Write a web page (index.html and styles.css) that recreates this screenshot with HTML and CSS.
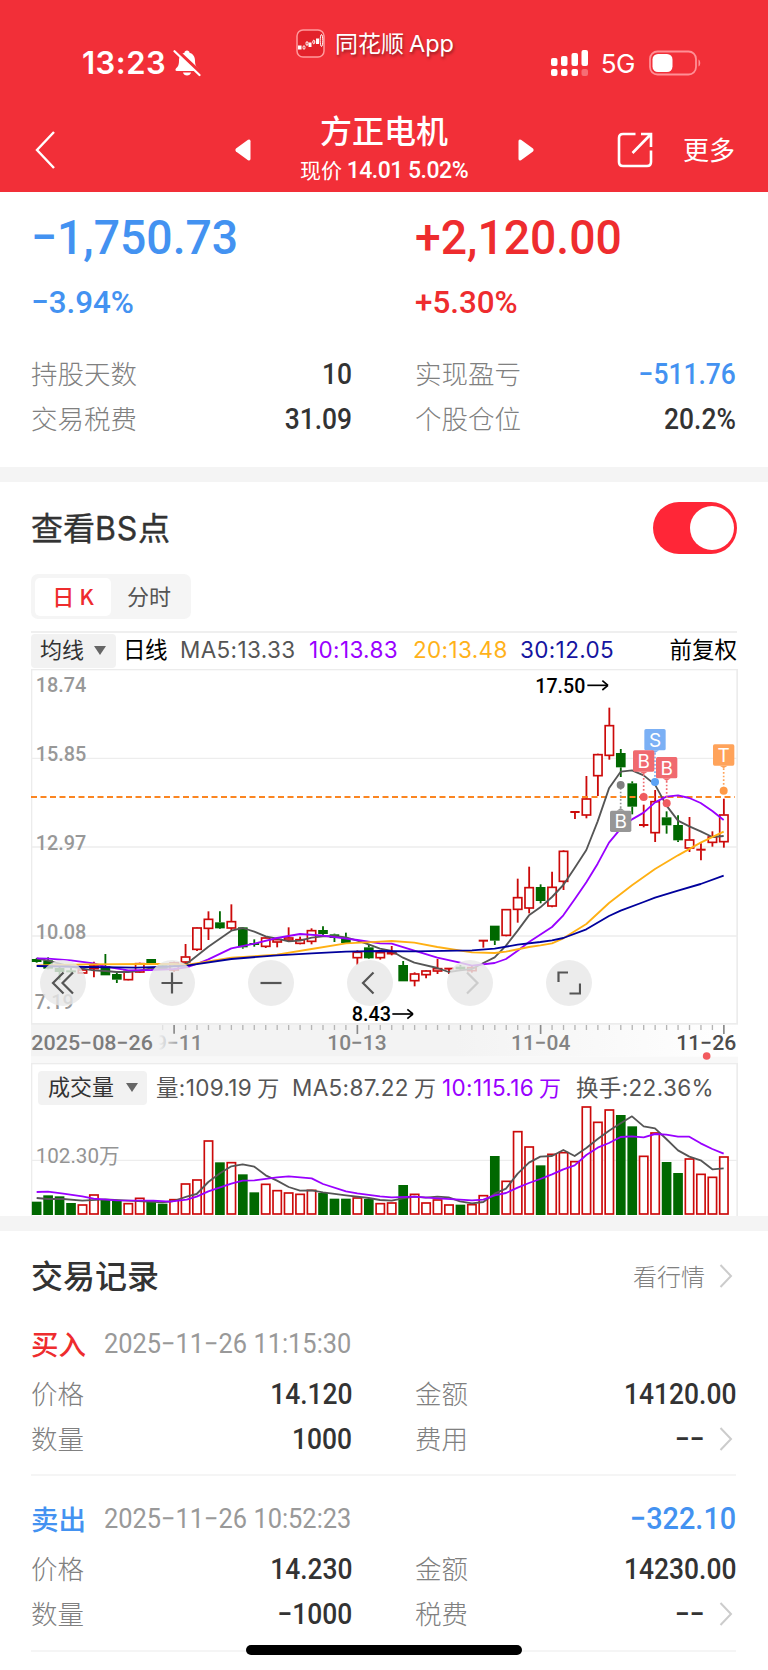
FILE: index.html
```html
<!DOCTYPE html>
<html lang="zh-CN">
<head>
<meta charset="utf-8">
<title>方正电机</title>
<link rel="stylesheet" href="styles.css">
</head>
<body>
<header class="top">
	<div class="status">
		<div class="status-left">
			<span class="time">13:23</span>
			<svg class="bell" width="28" height="28" viewBox="0 0 28 28">
				<path d="M14 1.500c-1.500 0-2.500 1-2.500 2.200C7.800 4.700 6 7.800 6 11.500c0 5-1.200 6.300-3 8-1 1-.6 2.500.8 2.500h20.400c1.400 0 1.800-1.500.8-2.500-1.800-1.700-3-3-3-8 0-3.700-1.800-6.800-5.500-7.800C16.500 2.500 15.500 1.500 14 1.500z" fill="#fff"/>
				<path d="M10 23.500h8c-.4 2-2 3-4 3s-3.600-1-4-3z" fill="#fff"/>
				<path d="M3 1L28 24.500" stroke="#f22f38" stroke-width="4"/>
				<path d="M1.500 2.200L26.500 26" stroke="#fff" stroke-width="2.200" stroke-linecap="round"/>
			</svg>
		</div>
		<div class="status-app">
			<svg width="30" height="30" viewBox="0 0 30 30">
				<rect x="1" y="1" width="27" height="27" rx="6" fill="#e3222b" stroke="#ff9a9c" stroke-width="1.500"/>
				<g fill="#fff">
					<rect x="2" y="16.500" width="3.500" height="4"/><rect x="12.500" y="13.500" width="3" height="4.500"/><rect x="20" y="9.500" width="3" height="5.500"/>
				</g>
				<g fill="none" stroke="#fff">
					<ellipse cx="8" cy="18.500" rx="1" ry="1.800"/><ellipse cx="11" cy="14.500" rx="1" ry="2"/><ellipse cx="17.800" cy="13" rx="1" ry="1.800"/><ellipse cx="25.500" cy="11.500" rx="1.300" ry="6"/>
				</g>
			</svg>
			<span>同花顺<b>App</b></span>
		</div>
		<div class="status-right">
			<svg width="38" height="28" viewBox="0 0 38 28" fill="#fff">
				<rect x="0" y="9" width="6.500" height="8" rx="2"/><rect x="10" y="7" width="6.500" height="10" rx="2"/><rect x="20.500" y="4" width="6.500" height="13" rx="2"/><rect x="30.500" y="1" width="6.500" height="16" rx="2"/>
				<rect x="0" y="20" width="6.500" height="7" rx="2"/><rect x="10" y="20" width="6.500" height="7" rx="2"/><rect x="20.500" y="20" width="6.500" height="7" rx="2"/><rect x="30.500" y="20" width="6.500" height="7" rx="2" opacity=".3"/>
			</svg>
			<span class="net">5G</span>
			<svg width="52" height="26" viewBox="0 0 52 26">
				<rect x="1" y="1.500" width="46" height="23" rx="7.500" fill="none" stroke="#ff9096" stroke-width="1.800"/>
				<rect x="3.500" y="4" width="20" height="18" rx="5.500" fill="#fff"/>
				<path d="M49.500 9.500c2.300 1 2.300 6 0 7z" fill="#ff9096"/>
			</svg>
		</div>
	</div>
	<nav class="nav">
		<svg class="back" width="22" height="40" viewBox="0 0 22 40"><path d="M20 2L3 20l17 18" fill="none" stroke="#fff" stroke-width="2.400"/></svg>
		<svg class="prev" width="16" height="22" viewBox="0 0 16 22"><path d="M1 9.500L13 .8q2.500-1 2.500 1.500v17.400q0 2.500-2.500 1.500L1 12.500q-1.200-1.500 0-3z" fill="#fff"/></svg>
		<div class="title">
			<h1>方正电机</h1>
			<p>现价 <span class="num">14.01 5.02%</span></p>
		</div>
		<svg class="next" width="16" height="22" viewBox="0 0 16 22"><path d="M15 9.500L3 .8Q.5-.2.5 2.300v17.400q0 2.500 2.500 1.500l12-8.700q1.200-1.500 0-3z" fill="#fff"/></svg>
		<svg class="share" width="36" height="36" viewBox="0 0 36 36" fill="none" stroke="#fff" stroke-width="2.600"><path d="M18.500 2H6Q2 2 2 6v24q0 4 4 4h24q4 0 4-4V18.500"/><path d="M24 2h10v13M34 2L15.500 21"/></svg>
		<span class="more">更多</span>
	</nav>
</header>

<section class="profit">
	<div class="col">
		<div class="amount blue num">−1,750.73</div>
		<div class="rate blue num">−3.94%</div>
		<div class="row"><label>持股天数</label><span class="num">10</span></div>
		<div class="row"><label>交易税费</label><span class="num">31.09</span></div>
	</div>
	<div class="col">
		<div class="amount red num">+2,120.00</div>
		<div class="rate red num">+5.30%</div>
		<div class="row"><label>实现盈亏</label><span class="num blue">−511.76</span></div>
		<div class="row"><label>个股仓位</label><span class="num">20.2%</span></div>
	</div>
</section>

<section class="chart">
	<div class="chart-head">
		<h2>查看<i>BS</i>点</h2>
		<div class="toggle"><div class="knob"></div></div>
	</div>
	<div class="tabs">
		<div class="tab active">日 K</div>
		<div class="tab">分时</div>
	</div>
	<div class="ma-bar">
		<div class="select">均线<i class="arrow"></i></div>
		<span class="day">日线</span>
		<span class="ma5">MA5:13.33</span>
		<span class="ma10">10:13.83</span>
		<span class="ma20">20:13.48</span>
		<span class="ma30">30:12.05</span>
		<span class="fq">前复权</span>
	</div>
	<div class="kline">
		<svg id="kline" width="707" height="394" viewBox="33 27 2121 1182"></svg>
		<div class="tools">
			<div class="tool first"><svg width="24" height="24" viewBox="0 0 24 24"><path d="M12.500 1.500L2 12l10.500 10.500M22 1.500L11.500 12 22 22.500"/></svg></div>
			<div class="tool"><svg width="24" height="24" viewBox="0 0 24 24"><path d="M1.500 12h21M12 1.500v21"/></svg></div>
			<div class="tool"><svg width="24" height="24" viewBox="0 0 24 24"><path d="M1.500 12h21"/></svg></div>
			<div class="tool"><svg width="24" height="24" viewBox="0 0 24 24"><path d="M15.500 1.500L5 12l10.500 10.500"/></svg></div>
			<div class="tool off"><svg width="24" height="24" viewBox="0 0 24 24"><path d="M9 1.500L19.500 12 9 22.500"/></svg></div>
			<div class="tool"><svg width="24" height="24" viewBox="0 0 24 24"><path d="M1.500 11V1.500H11M23 12.500V22.500H12.500"/></svg></div>
		</div>
	</div>
	<div class="volume">
		<div class="vol-bar">
			<div class="select">成交量<i class="arrow"></i></div>
			<span class="v1">量:109.19<em>万</em></span>
			<span class="v2">MA5:87.22<em>万</em></span>
			<span class="v3 ma10">10:115.16<em>万</em></span>
			<span class="v4">换手:22.36%</span>
		</div>
		<svg id="volume" width="707" height="153" viewBox="33 39 2121 459"></svg>
	</div>
</section>

<section class="records">
	<div class="rec-head">
		<h2>交易记录</h2>
		<span class="link">看行情</span>
		<svg class="chev" width="14" height="24" viewBox="0 0 14 24"><path d="M1.500 1L12 12 1.500 23"/></svg>
	</div>
	<div class="record first">
		<div class="rec-title"><b class="red">买入</b><time class="num">2025−11−26 11:15:30</time></div>
		<div class="cols">
			<div class="col">
				<div class="row"><label>价格</label><span class="num">14.120</span></div>
				<div class="row"><label>数量</label><span class="num">1000</span></div>
			</div>
			<div class="col">
				<div class="row"><label>金额</label><span class="num">14120.00</span></div>
				<div class="row"><label>费用</label><span class="num">−−</span><svg class="chev" width="14" height="24" viewBox="0 0 14 24"><path d="M1.500 1L12 12 1.500 23"/></svg></div>
			</div>
		</div>
	</div>
	<div class="record">
		<div class="rec-title"><b class="blue">卖出</b><time class="num">2025−11−26 10:52:23</time><span class="gain blue num">−322.10</span></div>
		<div class="cols">
			<div class="col">
				<div class="row"><label>价格</label><span class="num">14.230</span></div>
				<div class="row"><label>数量</label><span class="num">−1000</span></div>
			</div>
			<div class="col">
				<div class="row"><label>金额</label><span class="num">14230.00</span></div>
				<div class="row"><label>税费</label><span class="num">−−</span><svg class="chev" width="14" height="24" viewBox="0 0 14 24"><path d="M1.500 1L12 12 1.500 23"/></svg></div>
			</div>
		</div>
	</div>
</section>
<div class="home"></div>
<script src="chart.js"></script>
</body>
</html>
```

FILE: styles.css
```css
* {box-sizing: border-box;margin: 0;padding: 0;}
body {width: 768px;height: 1670px;overflow: hidden;position: relative;background: #fff;color: #333;font-family: "Liberation Sans", "Noto Sans CJK SC", sans-serif;}
svg {display: block;flex: none;}
i, em {font-style: normal;}
span, label, time, b {white-space: nowrap;}
.num {font-family: Roboto, "Noto Sans CJK SC", sans-serif;font-weight: 500;}
.blue {color: #4392f1 !important;}
.red {color: #ee2c2e !important;}

/* header */
.top {height: 192px;background: #f22f38;color: #fff;}
.status {height: 96px;position: relative;display: flex;justify-content: space-between;padding: 23px 67px 0 82px;}
.status-left {display: flex;align-items: center;height: 80px;}
.time {font: 600 31px/40px Inter, sans-serif;width: 91px;letter-spacing: .5px;}
.status-app {position: absolute;left: 296px;top: 28px;display: flex;align-items: center;height: 31px;font: 400 23px/31px "Noto Sans CJK SC", sans-serif;text-shadow: 1px 2px 3px rgba(0,0,0,.4);}
.status-app span {margin: -2px 0 0 9px;}
.status-app b {font: 400 23.500px/31px Inter, sans-serif;margin-left: 5px;}
.status-right {display: flex;align-items: center;height: 80px;}
.net {font: 400 26px/30px Inter, sans-serif;margin: 2px 14px 0 12px;letter-spacing: -.5px;}
.nav {height: 96px;display: flex;align-items: center;padding: 12px 33px 0 34px;}
.prev {margin-left: 179px;}
.title {width: 267px;text-align: center;}
.title h1 {font: 500 32px/38px "Noto Sans CJK SC", sans-serif;margin-top: -4px;}
.title p {font: 400 21px/30px "Noto Sans CJK SC", sans-serif;margin-top: 6px;}
.title .num {font-size: 23px;letter-spacing: -.5px;}
.next {margin-left: 1px;}
.share {margin-left: 83px;}
.more {font: 400 26px/40px "Noto Sans CJK SC", sans-serif;margin: -2px 0 0 30px;}

/* profit */
.profit {height: 275px;padding: 14px 32px 0 31px;display: flex;gap: 63px;}
.col {width: 321px;}
.amount {font-size: 49px;line-height: 64px;height: 62px;transform: scaleX(.945);transform-origin: 0 0;}
.rate {font-size: 32px;line-height: 68px;transform: scaleX(.98);transform-origin: 0 0;}
.row {height: 45px;display: flex;align-items: center;color: #333;}
.row label {flex: 1;font: 300 26.500px/45px "Noto Sans CJK SC", sans-serif;color: #808080;margin-top: -3px;}
.row .num {font-size: 29px;line-height: 45px;margin-top: 2px;transform: scaleX(.91);transform-origin: 100% 0;}
.profit .rate + .row {margin-top: 15px;}

/* chart */
.chart {height: 764px;border-top: 15px solid #f4f4f4;border-bottom: 15px solid #f4f4f4;padding: 0 31px;}
.chart-head {height: 92px;display: flex;align-items: center;justify-content: space-between;}
.chart-head h2 {font: 400 32px/40px "Noto Sans CJK SC", sans-serif;margin-top: -2px;-webkit-text-stroke: .4px #333;}
.chart-head i {font-family: Inter, sans-serif;letter-spacing: .8px;}
.toggle {width: 84px;height: 52px;border-radius: 26px;background: #ff2637;padding: 4px 3px 4px 37px;}
.knob {width: 44px;height: 44px;border-radius: 50%;background: #fff;}
.tabs {width: 160px;height: 45px;border-radius: 7px;background: #f5f5f5;padding: 4px;display: flex;}
.tab {width: 76px;height: 38px;border-radius: 5px;font: 400 22px/35px "Noto Sans CJK SC", sans-serif;text-align: center;color: #555;}
.tab.active {background: #fff;color: #ee2c2e;font-weight: 500;}
.ma-bar {height: 38px;margin-top: 12px;border-top: 2px solid #efefef;display: flex;align-items: center;font: 400 22.500px/34px Inter, "Noto Sans CJK SC", sans-serif;letter-spacing: .35px;color: #000;}
.ma-bar > span {margin-top: -2px;}
.select {height: 34px;width: 85px;padding: 0 0 2px 9px;border-radius: 4px;background: #f2f2f2;color: #333;font-size: 22px;letter-spacing: 0;display: flex;align-items: center;}
.arrow {border: 6px solid transparent;border-top: 9px solid #666;border-bottom: 0;margin-left: 10px;}
.day {margin-left: 7px;width: 57px;letter-spacing: -.5px;}
.ma5 {width: 129px;color: #555;}
.ma10 {width: 104px;color: #90f;}
.ma20 {width: 107px;color: #ffb21a;}
.ma30 {color: #1414a0;}
.ma-bar .fq {margin-left: auto;letter-spacing: 0;}
.kline {position: relative;width: 707px;height: 394px;}
.tools {position: absolute;left: 9px;top: 291px;display: flex;gap: 53.300px;}
.tool {width: 46px;height: 46px;border-radius: 50%;background: rgba(232,232,232,.82);display: flex;align-items: center;justify-content: center;}
.tool.first {margin-right: 9.500px;}
.tool svg {fill: none;stroke: #555;stroke-width: 2.200;}
.tool.off svg {stroke: #ccc;}
.volume {position: relative;width: 707px;height: 153px;}
.vol-bar {position: absolute;left: 7px;top: 8px;display: flex;align-items: center;font: 400 22.500px/34px Inter, "Noto Sans CJK SC", sans-serif;letter-spacing: .35px;color: #555;}
.vol-bar .select {width: 109px;padding-left: 10px;}
.vol-bar em {margin-left: 5px;font-size: 22px;letter-spacing: 0;}
.vol-bar .arrow {margin-left: 12px;}
.v1 {margin-left: 9px;width: 136px;}
.v2 {width: 150px;}
.v3 {width: 134px;}

/* records */
.records {padding: 0 32px 0 31px;}
.rec-head {height: 90px;display: flex;align-items: center;}
.rec-head h2 {flex: 1;font: 500 32px/40px "Noto Sans CJK SC", sans-serif;margin-top: -4px;}
.link {font: 300 24px/40px "Noto Sans CJK SC", sans-serif;color: #808080;}
.chev {fill: none;stroke: #ccc;stroke-width: 2;margin: 0 3px 0 14px;}
.record {height: 176px;padding-top: 20px;border-bottom: 2px solid #f5f5f5;}
.record.first {height: 155px;padding-top: 0;}
.rec-title {height: 50px;padding-bottom: 5px;display: flex;align-items: center;}
.rec-title b {font: 500 27.500px/40px "Noto Sans CJK SC", sans-serif;width: 73px;margin-top: -2px;}
.rec-title time {font-size: 27px;font-weight: 400;color: #999;transform: scaleX(.94);transform-origin: 0 0;}
.gain {margin-left: auto;font-size: 31px;transform: scaleX(.93);transform-origin: 100% 0;}
.cols {display: flex;gap: 63px;}
.home {position: absolute;left: 246px;top: 1645px;width: 276px;height: 10px;border-radius: 5px;background: #000;}
```

FILE: chart.js
```javascript
// candles: [colour, high, bodyTop, bodyBottom, low], 3 units per pixel
var candles=[
["g",894,897,906,908],["g",892,901,926,928],["g",920,924,936,960],["g",924,931,937,940],["r",926,929,939,941],
["r",905,917,926,952],["g",882,918,946,946],["g",938,942,959,969],["r",930,933,959,961],["r",908,910,936,938],
["g",897,897,910,910],["g",912,916,928,930],["r",905,908,930,936],["r",852,890,906,909],["r",802,803,868,873],
["r",754,777,805,840],["g",754,787,805,807],["r",733,784,804,812],["g",801,802,862,866],["g",838,849,855,860],
["r",830,833,859,864],["r",833,838,846,862],["r",802,833,840,846],["r",830,838,850,853],["r",805,811,844,853],
["g",799,810,822,826],["g",821,823,834,846],["g",818,834,849,851],["r",871,876,893,915],["g",855,862,895,897],
["r",875,877,893,899],["r",858,875,881,886],["g",903,915,964,964],["r",937,941,962,979],["r",930,932,944,955],
["r",897,925,933,942],["r",924,926,926,942],["g",915,920,928,932],["r",918,922,932,938],["r",840,842,842,863],
["g",797,797,842,855],["r",747,748,826,829],["r",656,712,748,788],["r",620,682,744,760],["g",673,681,723,730],
["r",635,681,738,742],["r",571,573,664,690],["r",454,456,456,477],["r",348,416,465,475],["r",281,283,347,408],
["r",143,196,286,299],["g",267,279,322,351],["g",364,370,440,463],["r",434,495,497,502],["r",390,424,518,546],
["g",454,472,496,521],["g",466,495,541,546],["r",471,539,564,576],["r",550,569,571,601],["r",514,530,547,560],["r",416,464,545,563]];

var volumes=[455,436,439,459,463,433,447,453,459,443,453,461,447,400,388,271,337,336,373,427,401,420,427,431,419,429,446,446,442,447,
459,457,405,431,457,448,463,464,462,435,318,392,243,289,346,311,306,333,169,215,178,195,229,317,247,336,369,325,371,380,319];

var priceMa=[
["#555","50,895 84,902 118,911 153,920 187,926 221,931 256,933 290,936 325,936 359,932 393,925 427,922 461,918 500,911 530,888 565,860 634,812 668,804 703,815 737,829 771,836 806,844 840,842 875,833 909,829 943,828 978,832 1012,842 1046,853 1080,866 1115,873 1149,893 1183,908 1252,924 1286,936 1320,931 1356,927 1390,909 1424,892 1458,857 1493,812 1527,766 1561,742 1596,711 1630,675 1664,624 1699,570 1733,484 1767,385 1802,335 1836,331 1871,346 1905,374 1939,436 1974,482 2008,499 2042,514 2077,531 2111,528"],
["#90f","50,895 84,896 153,901 221,910 256,920 325,931 393,930 461,927 500,922 530,912 565,898 634,865 703,851 771,834 840,822 909,827 978,836 1012,840 1080,850 1115,851 1183,872 1252,893 1320,908 1356,917 1424,909 1458,897 1493,872 1527,846 1596,801 1630,766 1664,718 1699,667 1733,611 1767,548 1802,506 1836,478 1871,458 1905,427 1939,410 1974,406 2008,414 2042,429 2077,453 2111,480"],
["#ffb013","50,916 200,913 380,912 461,912 500,915 634,893 771,884 875,867 978,850 1080,845 1115,843 1183,848 1252,861 1356,877 1424,879 1458,875 1527,861 1561,856 1596,850 1630,835 1699,792 1767,729 1836,676 1905,627 1974,586 2042,548 2111,515"],
["#00009c","50,918 200,921 350,923 461,919 500,917 634,897 771,886 875,880 978,875 1080,873 1183,874 1356,871 1424,866 1493,854 1561,846 1596,841 1630,834 1699,808 1767,768 1802,752 1871,726 1905,713 1974,692 2042,672 2111,647"]];

var volumeMa=[
["#555","50,444 84,447 130,447 187,452 256,448 325,452 427,457 461,453 500,440 530,432 565,396 600,370 634,349 668,343 703,350 737,376 771,392 806,411 840,422 875,421 909,427 978,436 1046,444 1080,450 1115,452 1149,445 1183,440 1217,443 1252,440 1286,442 1320,454 1356,460 1390,456 1424,431 1458,416 1493,371 1527,338 1561,320 1596,318 1630,300 1664,318 1699,294 1733,267 1767,242 1802,220 1836,199 1871,229 1905,235 1939,267 1974,301 2008,320 2042,331 2077,358 2111,355"],
["#90f","50,426 84,425 130,431 187,439 221,446 290,451 400,452 450,455 500,449 530,440 565,424 634,401 668,392 703,391 771,382 806,379 875,385 909,402 978,424 1012,430 1080,439 1115,442 1183,440 1252,445 1320,449 1356,451 1390,449 1424,436 1458,429 1493,413 1527,399 1561,387 1596,373 1630,358 1664,346 1699,315 1733,293 1767,279 1802,261 1836,259 1871,262 1905,252 1939,254 1974,260 2008,260 2042,280 2077,297 2111,311"]];

var RED="#cc0a0a", GREEN="#006800";

function cx(i){ return 50+i*34.36; }
function rect(x,y,w,h,extra){ return '<rect x="'+x+'" y="'+y+'" width="'+w+'" height="'+h+'" '+extra+'/>'; }
function line(x1,y1,x2,y2,color,w,extra){ return '<path d="M'+x1+' '+y1+'L'+x2+' '+y2+'" stroke="'+color+'" stroke-width="'+w+'" fill="none" '+(extra||'')+'/>'; }
function text(x,y,w,str,color,weight,size){
	return '<text x="'+x+'" y="'+y+'" textLength="'+w+'" lengthAdjust="spacingAndGlyphs" fill="'+color+'" font-weight="'+(weight||500)+'" font-size="'+(size||63)+'" font-family="Roboto, Noto Sans CJK SC, sans-serif">'+str+'</text>';
}
function lines(list){
	return list.map(function(l){ return '<polyline points="'+l[1]+'" fill="none" stroke="'+l[0]+'" stroke-width="5.500" stroke-linejoin="round"/>'; }).join("");
}

// marker: box centre x, box top, dot y
function marker(x,top,dot,letter,color,dotColor){
	var below=dot<top;
	var edge=below?top:top+64;
	var tip=below?top-8:top+72;
	return line(x,tip,x,dot,color,5,'stroke-dasharray="5 6"')
		+'<circle cx="'+x+'" cy="'+dot+'" r="12" fill="'+dotColor+'"/>'
		+'<path d="M'+(x-12)+' '+edge+'L'+x+' '+tip+'L'+(x+12)+' '+edge+'z" fill="'+color+'"/>'
		+rect(x-32,top,64,64,'rx="5" fill="'+color+'"')
		+'<text x="'+x+'" y="'+(top+53)+'" text-anchor="middle" fill="#fff" font-size="57" font-family="Inter, sans-serif">'+letter+'</text>';
}

var s='<defs><linearGradient id="strip"><stop offset="0" stop-color="#f3f3f3"/><stop offset=".6" stop-color="#f3f3f3"/><stop offset="1" stop-color="#fff"/></linearGradient><linearGradient id="strip2"><stop offset="0" stop-color="#f3f3f3"/><stop offset=".2" stop-color="#f3f3f3"/><stop offset="1" stop-color="#f3f3f3" stop-opacity="0"/></linearGradient></defs>';
s+=rect(33,1092,2121,98,'fill="url(#strip)"')+rect(33,1190,2121,20,'fill="#f8f8f8"');
s+=rect(34.500,28.500,2117,1063,'fill="#fff" stroke="#ececec" stroke-width="5"');
[295,561,828].forEach(function(y){ s+=line(33,y,2152,y,"#ededed",4); });
s+=text(47,95,152,"18.74","#989898")+text(47,303,152,"15.85","#989898")+text(47,570,152,"12.97","#989898")+text(47,837,152,"10.08","#989898")+text(44,1046,117,"7.19","#989898");
candles.forEach(function(c,i){
	var x=cx(i), color=c[0]=="r"?RED:GREEN;
	s+=line(x,c[1],x,c[2],color,5.500)+line(x,c[3],x,c[4],color,5.500);
	if(c[0]=="g"){ s+=rect(x-14.500,c[2],29,Math.max(c[3]-c[2],5),'fill="'+color+'"'); }
	else if(c[3]-c[2]<5){ s+=line(x-14,c[2],x+14,c[2],color,6); }
	else{ s+=rect(x-12.500,c[2]+1,25,c[3]-c[2]-1,'fill="#fff" stroke="'+color+'" stroke-width="5"'); }
});
s+=line(33,411,2144,411,"#fb8521",6,'stroke-dasharray="18 10.500"');
s+=lines(priceMa);
s+=marker(1802,452,375,"B","#969696","#808080");
s+=marker(1905,207,366,"S","#7bb0f5","#5ba3f5");
s+=marker(1871,271,411,"B","#f06a6f","#ef5b5f");
s+=marker(1940,291,430,"B","#f06a6f","#ef5b5f");
s+=marker(2111,253,392,"T","#ffa35a","#ff9a47");
s+=text(1546,98,150,"17.50","#000",500,62)+line(1702,76,1763,76,"#000",5)+line(1747,62,1764,76,"#000",5)+line(1747,90,1764,76,"#000",5);
s+=text(995,1084,118,"8.43","#000",500,62)+line(1117,1062,1178,1062,"#000",5)+line(1162,1048,1179,1062,"#000",5)+line(1162,1076,1179,1062,"#000",5);
for(var i=11;i<=60;i++){
	var major=i==12||i==28||i==44||i==60;
	s+=line(cx(i),1095,cx(i),major?1122:1110,major?"#8a8a8a":"#b5b5b5",major?5:4,i==11?'opacity=".3"':'');
}
s+=text(405,1171,143,"9−11","#888");
s+=rect(396,1120,95,56,'fill="url(#strip2)"');
s+=text(34,1171,365,"2025−08−26","#7c7c7c")+text(922,1171,178,"10−13","#848484")+text(1473,1171,178,"11−04","#848484")+text(1969,1171,180,"11−26","#4c4c4c");
s+='<circle cx="2060" cy="1188" r="11.500" fill="#f25a5e"/>';
document.getElementById("kline").innerHTML=s;

var v=rect(34.500,40.500,2117,500,'fill="#fff" stroke="#ececec" stroke-width="5"')+line(33,331,2152,331,"#ededed",4);
v+=text(47,340,252,"102.30万","#949494",400);
volumes.forEach(function(top,i){
	var x=cx(i);
	if(candles[i][0]=="g"){ v+=rect(x-14.500,top,29,495-top,'fill="'+GREEN+'"'); }
	else{ v+=rect(x-12.500,top+2,25,490-top,'fill="#fff" stroke="'+RED+'" stroke-width="5"'); }
});
v+=lines(volumeMa);
document.getElementById("volume").innerHTML=v;
```
